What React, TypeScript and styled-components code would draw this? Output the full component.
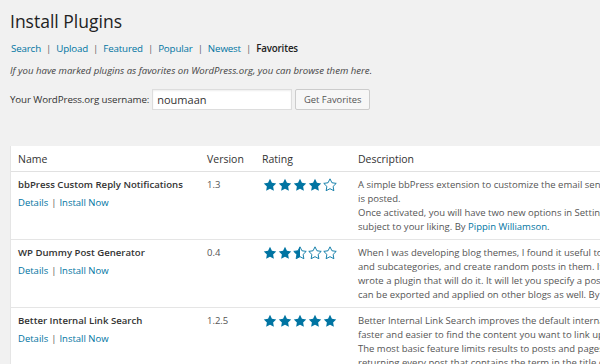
import React from "react";
import styled, { createGlobalStyle } from "styled-components";

const GlobalStyle = createGlobalStyle`
  html, body {
    margin: 0;
    padding: 0;
    background: #f1f1f1;
    overflow: hidden;
  }
  body {
    font-family: "Open Sans", "DejaVu Sans", sans-serif;
    color: #444;
  }
`;

const Wrap = styled.div`
  padding: 0 0 0 10px;
  width: 1100px;
`;

const Title = styled.h2`
  margin: 0;
  padding: 10px 0 0;
  font-size: 17.5px;
  font-weight: 400;
  line-height: 22px;
  color: #222;
`;

const SubNav = styled.ul`
  list-style: none;
  margin: 9px 0 0 1px;
  padding: 0;
  display: flex;
  font-size: 9.75px;
  letter-spacing: -0.15px;
  line-height: 16px;
`;

const NavItem = styled.li<{ $current?: boolean }>`
  color: ${(p) => (p.$current ? "#222" : "#0074a2")};
  font-weight: ${(p) => (p.$current ? 600 : 400)};
`;

const Sep = styled.span`
  color: #666;
  margin: 0 5px;
`;

const Hint = styled.p`
  margin: 6px 0 0;
  font-size: 9.6px;
  font-style: italic;
  line-height: 16px;
  color: #444;
`;

const UserForm = styled.div`
  display: flex;
  align-items: center;
  margin-top: 10px;
  gap: 3px;
`;

const Label = styled.label`
  font-size: 9.75px;
  letter-spacing: -0.1px;
  color: #333;
`;

const UserInput = styled.input`
  box-sizing: border-box;
  width: 140px;
  height: 21px;
  border: 1px solid #ddd;
  background: #fff;
  font-family: inherit;
  font-size: 11px;
  color: #333;
  padding: 0 4px;
  outline: none;
  box-shadow: inset 0 1px 2px rgba(0, 0, 0, 0.07);
`;

const Button = styled.button`
  box-sizing: border-box;
  height: 21px;
  width: 75px;
  border: 1px solid #ccc;
  border-radius: 2px;
  background: #f7f7f7;
  font-family: inherit;
  font-size: 9.4px;
  color: #555;
  padding: 0;
`;

const Table = styled.div`
  margin-top: 36px;
  display: grid;
  grid-template-columns: 189px 55px 96px 700px;
  background: #fff;
  border-left: 1px solid #e5e5e5;
`;

const HeadCell = styled.div`
  height: 25px;
  padding-left: 7px;
  display: flex;
  align-items: center;
  font-size: 10.5px;
  color: #333;
  border-bottom: 1px solid #e1e1e1;
`;

const Cell = styled.div<{ $last?: boolean }>`
  padding: 6px 0 5px 7px;
  font-size: 9.5px;
  line-height: 14px;
  color: #555;
  min-height: 56px;
  border-bottom: ${(p) => (p.$last ? "none" : "1px solid #e5e5e5")};
`;

const PluginName = styled.div`
  font-weight: 600;
  font-size: 9.6px;
  color: #333;
`;

const RowActions = styled.div`
  margin-top: 4px;
  color: #0074a2;
`;

const ActionSep = styled.span`
  color: #555;
  margin: 0 3px;
`;

const Desc = styled.div`
  white-space: nowrap;
`;

const Author = styled.span`
  color: #0074a2;
`;

const Stars = styled.div`
  display: flex;
  gap: 1px;
  margin-left: 1px;
`;

const STAR =
  "M10 1.2l2.75 5.6 6.15.9-4.45 4.35 1.05 6.1L10 15.25 4.5 18.15l1.05-6.1L1.1 7.7l6.15-.9z";

type Fill = "full" | "half" | "empty";

const Star = ({ fill, id }: { fill: Fill; id: string }) => (
  <svg width="14" height="14" viewBox="0 0 20 20">
    {fill === "half" && (
      <defs>
        <linearGradient id={id}>
          <stop offset="50%" stopColor="#0074a2" />
          <stop offset="50%" stopColor="#fff" />
        </linearGradient>
      </defs>
    )}
    <path
      d={STAR}
      fill={fill === "full" ? "#0074a2" : fill === "half" ? `url(#${id})` : "#fff"}
      stroke="#0074a2"
      strokeWidth={fill === "full" ? 0 : 1.3}
      strokeLinejoin="round"
    />
  </svg>
);

const Rating = ({ value, name }: { value: number; name: string }) => (
  <Stars>
    {[1, 2, 3, 4, 5].map((i) => {
      const fill: Fill =
        value >= i ? "full" : value >= i - 0.5 ? "half" : "empty";
      return <Star key={i} fill={fill} id={`${name}-${i}`} />;
    })}
  </Stars>
);

const plugins = [
  {
    name: "bbPress Custom Reply Notifications",
    version: "1.3",
    rating: 4,
    lines: [
      "A simple bbPress extension to customize the email sent to topic subscribers when a new reply",
      "is posted.",
      "Once activated, you will have two new options in Settings > Forums that let you set the email",
    ],
    last: (
      <>
        subject to your liking. By <Author>Pippin Williamson</Author>.
      </>
    ),
  },
  {
    name: "WP Dummy Post Generator",
    version: "0.4",
    rating: 2.5,
    lines: [
      "When I was developing blog themes, I found it useful to have a lot of dummy categories",
      "and subcategories, and create random posts in them. It was boring to do it by hand, so I",
      "wrote a plugin that will do it. It will let you specify a post title and content, which",
    ],
    last: (
      <>
        can be exported and applied on other blogs as well. By <Author>Dinesh Karki</Author>.
      </>
    ),
  },
  {
    name: "Better Internal Link Search",
    version: "1.2.5",
    rating: 5,
    lines: [
      "Better Internal Link Search improves the default internal linking feature in WordPress. It makes it",
      "faster and easier to find the content you want to link up to, right from the editor.",
      "The most basic feature limits results to posts and pages with matching titles, instead of",
    ],
    last: <>returning every post that contains the term in the title or content.</>,
  },
];

export default function App() {
  return (
    <>
      <GlobalStyle />
      <Wrap>
        <Title>Install Plugins</Title>
        <SubNav>
          {["Search", "Upload", "Featured", "Popular", "Newest"].map((t) => (
            <NavItem key={t}>
              {t}
              <Sep>|</Sep>
            </NavItem>
          ))}
          <NavItem $current>Favorites</NavItem>
        </SubNav>
        <Hint>
          If you have marked plugins as favorites on WordPress.org, you can
          browse them here.
        </Hint>
        <UserForm>
          <Label>Your WordPress.org username:</Label>
          <UserInput defaultValue="noumaan" />
          <Button>Get Favorites</Button>
        </UserForm>
        <Table>
          <HeadCell>Name</HeadCell>
          <HeadCell>Version</HeadCell>
          <HeadCell>Rating</HeadCell>
          <HeadCell>Description</HeadCell>
          {plugins.map((p, idx) => {
            const last = idx === plugins.length - 1;
            return (
              <React.Fragment key={p.name}>
                <Cell $last={last}>
                  <PluginName>{p.name}</PluginName>
                  <RowActions>
                    Details<ActionSep>|</ActionSep>Install Now
                  </RowActions>
                </Cell>
                <Cell $last={last}>{p.version}</Cell>
                <Cell $last={last}>
                  <Rating value={p.rating} name={`r${idx}`} />
                </Cell>
                <Cell $last={last}>
                  {p.lines.map((l) => (
                    <Desc key={l}>{l}</Desc>
                  ))}
                  <Desc>{p.last}</Desc>
                </Cell>
              </React.Fragment>
            );
          })}
        </Table>
      </Wrap>
    </>
  );
}
